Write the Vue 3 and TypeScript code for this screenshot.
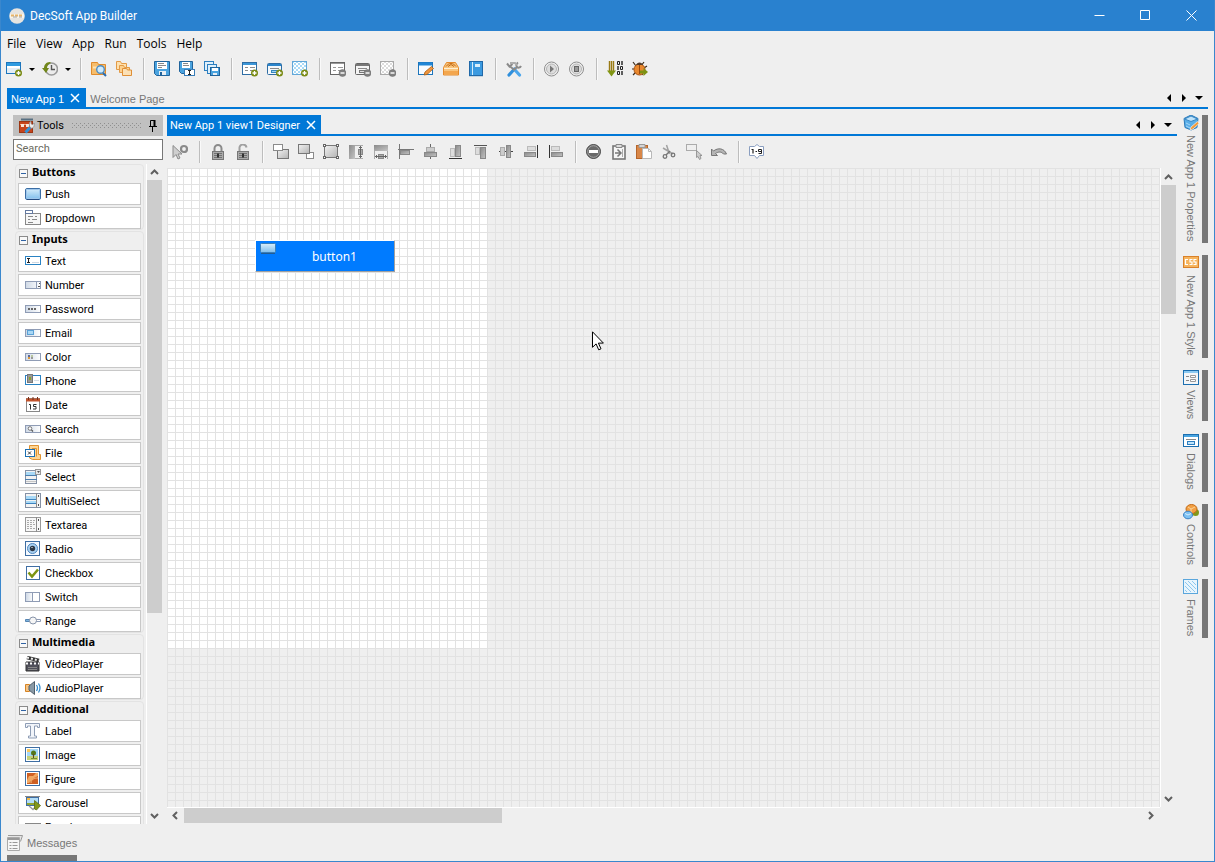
<script setup lang="ts">
import { ref } from 'vue'

interface Tool { label: string; icon: string }
interface ToolGroup { title: string; open: boolean; items: Tool[] }

const minusBadge = '<circle cx="12.500" cy="12" r="3.500" fill="#808080" stroke="#6a6a6a" stroke-width=".5"/><path d="M10.500 12h4" stroke="#fff" stroke-width="1.400"/>'
const plusBadge = '<circle cx="12.500" cy="12" r="3.500" fill="#7a8b16"/><path d="M10.500 12h4M12.500 10v4" stroke="#fff" stroke-width="1.300"/>'
const inputBox = '<rect x=".5" y="4.500" width="15" height="7" fill="url(#g-field)" stroke="#8f9cb5"/>'
const sheet = '<rect x=".5" y="1.500" width="14" height="12" fill="#fff"'

const icons: Record<string, string> = {
  newApp: '<rect x=".5" y="1.500" width="14" height="11" fill="#fff" stroke="#1c75bc"/><path d="M1 3.500h13" stroke="#2f9be0" stroke-width="3"/><path d="M1 7h13v5H1z" fill="#e4edf5"/>' + plusBadge,
  history: '<circle cx="9.500" cy="8" r="6" fill="#ececec" stroke="#9a9a9a" stroke-width="1.600"/><path d="M9.500 4v4.500H13" stroke="#555" stroke-width="1.400" fill="none"/><path d="M8 1C4 1 2 4 2 7H0l4 5 3-5H5c0-2 1-4 4-5z" fill="#71861a"/>',
  folderFind: '<path d="M.5 13.500V1.500h6l1 2h7v10z" fill="#f6bd6c" stroke="#e08b2c"/><path d="M2 6.500h11" stroke="#fde3b4" stroke-width="2"/><circle cx="9.500" cy="8.500" r="3.800" fill="#cfeafc" stroke="#4d8cc4" stroke-width="1.400"/><path d="M12 12l3 3" stroke="#2a6db0" stroke-width="2"/>',
  folders: '<path d="M.5 8.500v-8h4l1 2h5v6z" fill="#fde0ae" stroke="#e39a45"/><path d="M3.500 11.500v-7h4l1 2h5v5z" fill="#fcd08d" stroke="#e39a45"/><path d="M6.500 14.500v-7h4l1 1.500h4v5.500z" fill="#fbe0b5" stroke="#df8f36"/>',
  save: '<path d="M.5 .5h15v14h-13l-2-2z" fill="#4aa3df" stroke="#20639b"/><path d="M3 1h10v7H3z" fill="#fff"/><path d="M4 2.500h6M4 4.500h8M4 6.500h4" stroke="#888"/><path d="M5 10h7v4H5z" fill="#e8eff5"/><path d="M6 11h2v3H6z" fill="#20639b"/>',
  saveAs: '<path d="M.5 .5h13v12h-11l-2-2z" fill="#4aa3df" stroke="#20639b"/><path d="M3 1h8v6H3z" fill="#fff"/><path d="M4 2.500h5M4 4.500h6" stroke="#888"/><rect x="5.500" y="8.500" width="10" height="6" fill="#fff" stroke="#397db8"/><path d="M9 9.500h3M9 13.500h3M10.500 9.500v4" stroke="#222"/>',
  saveAll: '<rect x=".5" y=".5" width="9" height="9" fill="#dff0fb" stroke="#2d7fc0"/><rect x="3.500" y="3.500" width="9" height="9" fill="#dff0fb" stroke="#2d7fc0"/><rect x="6.500" y="6.500" width="9" height="8" fill="#4aa3df" stroke="#20639b"/><path d="M8 7h6v3H8z" fill="#fff"/><path d="M9 12h4v2H9z" fill="#e8eff5"/>',
  viewAdd: sheet + ' stroke="#2e6da4"/><path d="M1 3h13" stroke="#3c97d8" stroke-width="2"/><path d="M3 6.500h3M3 9.500h3M8 6.500h5M8 9.500h3" stroke="#8c8c8c"/>' + plusBadge,
  dialogAdd: '<rect x=".5" y="2.500" width="14" height="11" rx="1" fill="#f4f7fa" stroke="#2e6da4"/><path d="M1 4h13" stroke="#2b85cb" stroke-width="2"/><path d="M3 7.500h9" stroke="#888"/><rect x="4.500" y="9.500" width="6" height="2" fill="#9fd3f3" stroke="#3485bd"/>' + plusBadge,
  frameAdd: '<rect x=".5" y=".5" width="14" height="13" fill="#fff" stroke="#62a7d8"/><rect x="1" y="1" width="13" height="12" fill="url(#p-blue)"/>' + plusBadge,
  viewDel: sheet + ' stroke="#666"/><path d="M1 2.500h13" stroke="#999"/><path d="M3 6.500h3M3 9.500h3M8 6.500h5M8 9.500h3" stroke="#999"/>' + minusBadge,
  dialogDel: '<rect x=".5" y="2.500" width="14" height="11" rx="1" fill="#f4f4f4" stroke="#666"/><path d="M1 4h13" stroke="#777" stroke-width="2"/><path d="M3 7.500h9" stroke="#888"/><rect x="4.500" y="9.500" width="6" height="2" fill="#ddd" stroke="#777"/>' + minusBadge,
  frameDel: '<rect x=".5" y=".5" width="13" height="13" fill="#fff" stroke="#aaa"/><rect x="1" y="1" width="12" height="12" fill="url(#p-grey)"/>' + minusBadge,
  edit: '<rect x=".5" y="1.500" width="14" height="12" fill="#f7fbff" stroke="#1c75bc"/><path d="M1 3h13" stroke="#1f86d6" stroke-width="3"/><path d="M6 14l1-3 6.500-5.500 2 2L9 13.500z" fill="#f0953c" stroke="#a55d18" stroke-width=".8"/>',
  box: '<path d="M.5 6.500l3-5h9l3 5v7.500H.5z" fill="#f9c57e" stroke="#e58a2b"/><path d="M3 5.500c3-4 7-4 10 0M5 5.500l3-2 3 2" stroke="#c46b14" fill="none"/><path d="M1 7.500h14" stroke="#fff0d3"/><path d="M1 10h14v3.500H1z" fill="#f3a64e"/>',
  book: '<rect x="1.500" y=".5" width="13" height="14" fill="#3b9ae0" stroke="#2068a8"/><path d="M4.500 1v13" stroke="#d4ecfb"/><path d="M7 3h5v3H7z" fill="#d9effc"/><path d="M1 15.500h14" stroke="#c3d5e2"/>',
  tools: '<path d="M3 14l5.500-6" stroke="#2f8fdc" stroke-width="3.200" stroke-linecap="round"/><path d="M13.500 14L9 9" stroke="#4ca6ec" stroke-width="3.200" stroke-linecap="round"/><path d="M1 2.500l2.500 3L6.500 3M3.500 5l5 4" stroke="#8a8a8a" stroke-width="2" fill="none"/><path d="M15 5c-1 2-3 2-4 1s-1-3 1-4.500M11 6L8 9" stroke="#8a8a8a" stroke-width="2" fill="none"/><path d="M4 2h5l2 2" stroke="#adadad" stroke-width="2" fill="none"/>',
  play: '<circle cx="7.500" cy="8" r="7" fill="#f1f1f1" stroke="#8d8d8d"/><circle cx="7.500" cy="8" r="5" fill="#ddd" stroke="#b5b5b5"/><path d="M6 4.500v7l4-3.500z" fill="#777"/>',
  stop: '<circle cx="7.500" cy="8" r="7" fill="#f1f1f1" stroke="#8d8d8d"/><circle cx="7.500" cy="8" r="5" fill="#ddd" stroke="#b5b5b5"/><rect x="5.500" y="5.500" width="4" height="5" fill="#999" stroke="#666"/>',
  compile: '<path d="M2.500 0v10M4.500 0v10M6.500 0v10" stroke="#9a7b16" stroke-width="1.400"/><path d="M0 9.500h9l-4.500 6z" fill="#809512"/><path d="M10.500 .5h2v3h-2zM10.500 10.500h2v3h-2zM13.500 5.500h2v3h-2z" fill="none" stroke="#222"/><path d="M15 0v4M11 5v4M15 10v4" stroke="#222" stroke-width="1.400"/>',
  debug: '<path d="M1 1l3 4M12 1l-3 4M0 8h3M15 5l-3 2M1 14l3-3M11 14l-2-3" stroke="#3b2b1c" stroke-width="1.200"/><ellipse cx="7.500" cy="8.500" rx="5.500" ry="5.500" fill="#e9882f" stroke="#a95412"/><path d="M4 4c1-3.500 6-3.500 7 0z" fill="#523c2b"/><path d="M7.500 4v9" stroke="#9a4a0e"/><path d="M8 9.500h3.500V7l4.500 4-4.500 4v-2.500H8z" fill="#7d9214"/>',
  deselect: '<path d="M1 1.500v12l3-3 2 4.500 2-1-2-4h4z" fill="#cfcfcf" stroke="#8b8b8b"/><circle cx="12" cy="5" r="3" fill="#f0f0f0" stroke="#8a8a8a" stroke-width="2.200"/>',
  lock: '<path d="M4.500 8V4.500a3.500 3.500 0 0 1 7 0V8" fill="none" stroke="#8b8b8b" stroke-width="2"/><rect x="2.500" y="7.500" width="11" height="8" fill="#aaa" stroke="#777"/><path d="M4 9.500h8M4 11.500h8M4 13.500h8" stroke="#727272"/><path d="M8 9.500v4" stroke="#333" stroke-width="2"/>',
  unlock: '<path d="M4.500 8V4.500a3.500 3.500 0 0 1 7-1" fill="none" stroke="#a0a0a0" stroke-width="2"/><rect x="2.500" y="7.500" width="11" height="8" fill="#aaa" stroke="#777"/><path d="M4 9.500h8M4 11.500h8M4 13.500h8" stroke="#727272"/><path d="M8 9.500v4" stroke="#333" stroke-width="2"/>',
  front: '<rect x="4.500" y="5.500" width="11" height="9" fill="url(#g-grey)" stroke="#777"/><rect x=".5" y=".5" width="9" height="6" fill="#fff" stroke="#8b8b8b"/>',
  back: '<rect x="8.500" y="8.500" width="7" height="6" fill="#fff" stroke="#8b8b8b"/><rect x=".5" y=".5" width="11" height="9" fill="url(#g-grey)" stroke="#777"/>',
  resize: '<rect x="1.500" y="1.500" width="13" height="12" fill="url(#g-grey)" stroke="#777"/><path d="M0 0h3v3H0zM13 0h3v3h-3zM0 12h3v3H0zM13 12h3v3h-3z" fill="#666"/><path d="M1 1h1v1H1zM14 1h1v1h-1zM1 13h1v1H1zM14 13h1v1h-1z" fill="#fff"/>',
  sameH: '<rect x="1" y="1" width="6" height="14" fill="url(#g-dark)"/><path d="M7 1.500h8M7 14.500h8" stroke="#aaa"/><rect x="10.500" y="5.500" width="4" height="5" fill="#aaa" stroke="#888"/><path d="M12.500 2v12M11 3.500h3M11 12.500h3" stroke="#666"/>',
  sameW: '<rect x="1" y="1" width="14" height="6" fill="url(#g-dark)"/><path d="M1.500 7v8M14.500 7v8" stroke="#aaa"/><rect x="5.500" y="10.500" width="5" height="4" fill="#aaa" stroke="#888"/><path d="M2 12.500h12M3.500 11v3M12.500 11v3" stroke="#666"/>',
  hline: '<path d="M1.500 0v15M0 5.500h16" stroke="#777"/><rect x="2.500" y="6.500" width="9" height="4" fill="url(#g-dark)" stroke="#888"/>',
  centerH: '<path d="M7.500 0v15" stroke="#666"/><rect x="3.500" y="3.500" width="8" height="4" fill="#ccc" stroke="#aaa"/><rect x="1.500" y="8.500" width="12" height="4" fill="url(#g-dark)" stroke="#888"/>',
  bottom: '<rect x="2.500" y="4.500" width="4" height="8" fill="#ddd" stroke="#bbb"/><rect x="7.500" y="1.500" width="5" height="11" fill="url(#g-dark)" stroke="#888"/><path d="M1 14.500h13" stroke="#333"/>',
  top: '<path d="M1 1.500h13" stroke="#555"/><rect x="2.500" y="3.500" width="4" height="7" fill="#ddd" stroke="#bbb"/><rect x="7.500" y="3.500" width="5" height="11" fill="url(#g-dark)" stroke="#888"/>',
  middle: '<path d="M1 7.500h14" stroke="#444"/><rect x="2.500" y="3.500" width="4" height="8" fill="#ccc" stroke="#aaa"/><rect x="8.500" y="1.500" width="4" height="12" fill="url(#g-dark)" stroke="#888"/>',
  right: '<rect x="4.500" y="2.500" width="8" height="4" fill="#ddd" stroke="#bbb"/><rect x="1.500" y="8.500" width="11" height="4" fill="url(#g-dark)" stroke="#888"/><path d="M14.500 1v13" stroke="#333"/>',
  left: '<path d="M1.500 1v13" stroke="#333"/><rect x="3.500" y="2.500" width="8" height="4" fill="#ddd" stroke="#bbb"/><rect x="3.500" y="8.500" width="11" height="4" fill="url(#g-dark)" stroke="#888"/>',
  remove: '<circle cx="7.500" cy="7.500" r="7" fill="#6a6a6a" stroke="#4a4a4a"/><circle cx="7.500" cy="7.500" r="5.800" fill="none" stroke="#a5a5a5"/><path d="M3 6h9v3H3z" fill="#fff"/>',
  clipCopy: '<rect x="2" y="2" width="12" height="13" fill="#f6f6f6" stroke="#777" stroke-width="1.600"/><path d="M5 .5h6v3H5z" fill="#ddd" stroke="#888"/><path d="M4 9h5M6.500 5.500L10 9l-3.500 3.500" fill="none" stroke="#777" stroke-width="1.500"/><path d="M11.500 5v8" stroke="#aaa"/>',
  paste: '<rect x=".5" y="1.500" width="11" height="13" fill="#d98748" stroke="#b5652a"/><path d="M3 .5h6v3H3z" fill="#d5d5d5" stroke="#999"/><path d="M6.500 4.500h6l3 3v7h-9z" fill="#fff" stroke="#b9b9b9"/><path d="M12.500 4.500v3h3" fill="none" stroke="#b9b9b9"/>',
  cut: '<path d="M5.500 1l3 9M2 4l10 6" stroke="#a2a2a2" stroke-width="1.500"/><path d="M9 7l-4 4" stroke="#777" stroke-width="1.500"/><circle cx="4" cy="12.500" r="1.800" fill="none" stroke="#777" stroke-width="1.300"/><circle cx="12" cy="11" r="1.800" fill="none" stroke="#777" stroke-width="1.300"/>',
  marquee: '<rect x=".5" y=".5" width="10" height="6" fill="none" stroke="#666" stroke-dasharray="1 1"/><path d="M10.500 6.500v7l1.500-1 1.500 3 1.500-1-1-3h2z" fill="#ccc" stroke="#888" stroke-width=".8"/>',
  undo: '<path d="M.5 5v6.500h6l-2-2c3-2 6-2 8 .5h3C13 4 7 3.500 2.500 7z" fill="#b5b5b5" stroke="#777"/>',
  order: '<path d="M.5 2.500h5L8 .5l2.500 2h4v9h-4L8 14.500l-2.500-3h-5z" fill="#fff" stroke="#8a9ec0"/><path d="M2.500 5.500h1.500v4M6.500 7.500h1.500" stroke="#222" fill="none" stroke-width="1.200"/><path d="M12.500 7.500h-3v-2h3v4h-3" stroke="#222" fill="none"/>',
  toolbox: '<path d="M2 1.500h12" stroke="#587083" stroke-width="2"/><rect x=".5" y="3.500" width="13" height="11" fill="#c6441c" stroke="#9c3512"/><path d="M1 6.500h12" stroke="#f4a77e"/><path d="M2 6h3v3H2zM7 6h3v3H7z" fill="#f7e5da"/><path d="M6.500 14.500l4.500-5" stroke="#3192d8" stroke-width="3"/><path d="M15 5c-.5 2-3 2-3 0s0-2-1-1-1 5 1 6 4-2 3-5z" fill="#eee" stroke="#888" stroke-width=".7"/>',
  push: '<rect x=".5" y="2.500" width="15" height="11" rx="1.500" fill="url(#g-blue)" stroke="#3b6ea5"/><path d="M2 13.500h12" stroke="#234a80"/><rect x="1.500" y="3.500" width="13" height="9" rx="1" fill="none" stroke="#9fc7ec"/>',
  dropdown: '<rect x=".5" y="3.500" width="15" height="11" fill="#f7f7f7" stroke="#888"/><rect x=".5" y=".5" width="7" height="3" fill="#fff" stroke="#64799f"/><path d="M3 6.500h5M10 6.500h2M3 9.500h2M7 9.500h5M3 12.500h5" stroke="#888"/>',
  text: '<rect x=".5" y="3.500" width="15" height="8" fill="#fff" stroke="#2a83c4"/><path d="M2 5.500h3M2 9.500h3M3.500 5.500v4" stroke="#222"/><path d="M7 9.500h7" stroke="#cfd8e2"/>',
  number: inputBox + '<path d="M11.500 5v7" stroke="#8f9cb5"/><path d="M13 7h1v-1h1v1zM13 9h2v1h-2z" fill="#555"/>',
  password: inputBox + '<path d="M3 7h2v2H3zM6 7h2v2H6zM9 7h2v2H9z" fill="#666"/>',
  email: inputBox + '<rect x="2.500" y="5.500" width="6" height="4" fill="#a9d7f5" stroke="#5aa1d6"/>',
  color: inputBox + '<path d="M3 6h2v2H3z" fill="#5a6aa0"/><path d="M6 6h2v2H6z" fill="#b9c8a0"/><path d="M3 8h2v2H3z" fill="#e0993a"/><path d="M6 8h2v2H6z" fill="#999"/>',
  phone: '<rect x=".5" y="2.500" width="15" height="9" fill="#fff" stroke="#2a83c4"/><path d="M9 7.500h5" stroke="#d6dde5"/><rect x="2.500" y="1.500" width="5" height="8" fill="#999" stroke="#777"/><path d="M4 4h2v3H4z" fill="#8ba32a"/>',
  date: '<rect x="1.500" y="1.500" width="13" height="13" fill="#fff" stroke="#888"/><path d="M1 3h14" stroke="#c1532c" stroke-width="3"/><path d="M3.500 0v3M8 0v3M12.500 0v3" stroke="#7b2f15"/><path d="M4 7.500h1.500v5M11.500 7.500h-3v2h2.500v2.500h-3" stroke="#333" fill="none"/>',
  search: inputBox + '<circle cx="5" cy="7.500" r="1.800" fill="#fff" stroke="#777"/><path d="M6.500 9l1.500 1.500" stroke="#555" stroke-width="1.300"/>',
  file: '<path d="M4.500 13V.5h9v9h2v5h-8z" fill="#fcd594" stroke="#e09332"/><path d="M7 3.500h4.500v8" stroke="#e09332" fill="none"/><rect x=".5" y="4.500" width="9" height="7" fill="#fff" stroke="#1c6fb0"/><path d="M3 6.500l3 3M6 6.500l-3 3" stroke="#333"/>',
  select: '<rect x=".5" y="1.500" width="11" height="13" fill="#f2f2f2" stroke="#8591a5"/><path d="M1 3h10v3H1z" fill="#a9d9f6"/><path d="M0 6.500h12M0 10.500h12" stroke="#4d7fae"/><path d="M1 12.500h10" stroke="#c5c5c5"/><rect x="10.500" y=".5" width="5" height="5" fill="#e9e9e9" stroke="#999"/><path d="M12 2h3l-1.500 2z" fill="#555"/>',
  multi: '<rect x=".5" y=".5" width="15" height="14" fill="#f4f4f4" stroke="#8591a5"/><path d="M1 3h10v3H1zM1 8h10v2H1z" fill="#a9d9f6"/><path d="M1 6.500h10M1 10.500h10" stroke="#3d83be"/><path d="M11.500 0v15" stroke="#8c8c8c"/><path d="M13 2h1v2h-1zM13 11h1v2h-1z" fill="#555"/>',
  textarea: '<rect x=".5" y=".5" width="15" height="14" fill="#f7f7f7" stroke="#999"/><path d="M2 3.500h8M2 5.500h7M2 7.500h8M2 9.500h6M2 11.500h8" stroke="#aaa" stroke-dasharray="2 1"/><path d="M11.500 0v15" stroke="#8c8c8c"/><path d="M13 2h1v2h-1zM13 11h1v2h-1z" fill="#555"/>',
  radio: '<rect x=".5" y=".5" width="14" height="14" fill="#f4f9ff" stroke="#3f6ea3"/><circle cx="7.500" cy="7.500" r="5" fill="#a9d1f2" stroke="#4f86bd"/><circle cx="7.500" cy="7.500" r="2.700" fill="#2d3846"/><path d="M6.500 6h1v1h-1z" fill="#fff"/>',
  checkbox: '<rect x="1.500" y="1.500" width="13" height="13" fill="#fff" stroke="#3f6ea3"/><path d="M3.500 7.500l3.500 4 6-7" fill="none" stroke="#7c9412" stroke-width="2.500"/>',
  switch: '<rect x=".5" y="3.500" width="14" height="9" fill="#fff" stroke="#8f9cb5"/><rect x="1" y="4" width="7" height="8" fill="url(#g-field)"/><path d="M7.500 4v8" stroke="#8f9cb5"/>',
  range: '<path d="M.5 6.500h5v2h-5z" fill="#80b4dd" stroke="#5685b2"/><path d="M10.500 6.500h5v2h-5z" fill="#fff" stroke="#8f9cb5"/><circle cx="8" cy="7.500" r="3.500" fill="#f6f6f6" stroke="#8592a8"/>',
  video: '<path d="M2 1.500l12 3" stroke="#333" stroke-width="3.500"/><path d="M2 1.500l12 3" stroke="#eee" stroke-width="2" stroke-dasharray="2 2"/><path d="M1 6h13v9H1z" fill="#50505a" stroke="#333"/><path d="M1 7.500h13" stroke="#fff" stroke-width="2" stroke-dasharray="2 2"/><path d="M3 11.500h9M3 13.500h9" stroke="#888"/>',
  audio: '<path d="M.5 4.500h4v7h-4z" fill="#f7c483" stroke="#d58325"/><path d="M4 6L9.500 1.500v13L4 10z" fill="#899aa7" stroke="#51606c"/><path d="M11.500 5q2 3 0 6M13.500 3.500q3 4.500 0 9" stroke="#368fd0" fill="none" stroke-width="1.300"/>',
  label: '<path d="M.5 .5h14v4h-2V3h-3v10h2v2h-8v-2h2V3h-3v1.500h-2z" fill="#f2f5fa" stroke="#8e9db5"/>',
  image: '<rect x=".5" y=".5" width="14" height="14" fill="#fff" stroke="#3f6ea3"/><path d="M2 2h11v7H2z" fill="#a3d7f6"/><path d="M2 9h11v4H2z" fill="#c3cf78"/><circle cx="8.500" cy="6" r="2.500" fill="#53781a"/><path d="M8.500 7v4" stroke="#5d4525"/><path d="M6 11.500h6" stroke="#76912c"/><path d="M2 2h3v3H2z" fill="#f8c75c"/>',
  figure: '<rect x=".5" y=".5" width="14" height="14" fill="#fff" stroke="#3f6ea3"/><path d="M2 2h11v11H2z" fill="#cf5f22"/><path d="M2 9l2-4h4l3-3h2v3L9 7l-5 5H2z" fill="#f0a862"/><path d="M6 12c0-4 4-5 7-5" stroke="#f3b67a" fill="none"/>',
  carousel: '<path d="M0 1.500h15" stroke="#888"/><rect x="1.500" y="2.500" width="12" height="8" fill="#b2ddf8" stroke="#3f6ea3"/><path d="M2 8h11v2H2z" fill="#92a72d"/><path d="M2 3h3v2H2z" fill="#f6b940"/><path d="M4 11l4 3.500 3-3.500" fill="none" stroke="#999" stroke-width="1.300"/><path d="M9.500 5.500l6 5-4 4.500-2-1z" fill="#82981a" stroke="#5e6d12" stroke-width=".8"/>',
  panel: '<rect x=".5" y="4.500" width="15" height="10" fill="#eee" stroke="#888"/>',
  properties: '<path d="M8 0l7 3.500-1 9L8 15 2 12.500 1 3.500z" fill="#59aee8" stroke="#2c7ab9"/><path d="M1.500 4L8 6.500 14.500 4 8 1z" fill="#bfe3fa" stroke="#3b89c5"/><path d="M3 8l4 2M3 11l4 2" stroke="#a7d7f7"/><path d="M7 15l1-3 6.500-5.500 1.500 2L10 14z" fill="#f39b3b" stroke="#fff" stroke-width=".6"/>',
  style: '<rect x=".5" y="1.500" width="15" height="11" fill="#f6b45d" stroke="#d9812a"/><path d="M5 4.500H2.500v5H5M9.500 4.500H7v2.500h2v2.500H6.500M13.500 4.500H11v2.500h2v2.500h-2.500" fill="none" stroke="#fff" stroke-width="1.200"/>',
  views: '<rect x=".5" y=".5" width="15" height="14" fill="#f4f6f8" stroke="#1c6fb0"/><path d="M1 2h14" stroke="#8ccaf2" stroke-width="2"/><path d="M3 6.500h3M3 10.500h3" stroke="#888"/><path d="M7.500 5.500h5v2h-5zM7.500 9.500h5v2h-5z" fill="#fff" stroke="#999"/>',
  dialogs: '<rect x=".5" y="1.500" width="15" height="12" fill="#fff" stroke="#1c6fb0"/><path d="M1 3h14" stroke="#49a4e0" stroke-width="2"/><path d="M3 6.500h10" stroke="#888"/><rect x="4.500" y="8.500" width="7" height="3" fill="#bfe3fa" stroke="#2d7fc0"/>',
  controls: '<circle cx="12.500" cy="8.500" r="3.500" fill="#82981a"/><ellipse cx="8.500" cy="5" rx="5.500" ry="4.500" fill="#f2a044" stroke="#c36a16"/><path d="M5 3l3 2 4-2M8 5v4" stroke="#fbd39a" fill="none"/><ellipse cx="5" cy="11" rx="4.500" ry="3.800" fill="#7cc1f3" stroke="#3b80c4"/><path d="M2 9.500l3 1.500 3-1.500" stroke="#d7eefd" fill="none"/>',
  frames: '<rect x=".5" y=".5" width="14" height="14" fill="#e9f5fd" stroke="#5aa6dc"/><path d="M2 3l10 10M2 7l6 6M2 11l2 2M5 2l8 8M9 2l4 4" stroke="#8ec8ee"/>',
  messages: '<path d="M1 .5h14.500l-2 6" fill="#e4e4e4" stroke="#999"/><path d="M.5 2.500h12v13H.5z" fill="#f7f7f7" stroke="#aaa"/><path d="M1 4h11" stroke="#999" stroke-width="2"/><path d="M2.500 7.500h2M5.500 7.500h5M2.500 10.500h2M5.500 10.500h5M2.500 13.500h2M5.500 13.500h5" stroke="#999"/>'
}

const menus = ['File', 'View', 'App', 'Run', 'Tools', 'Help']

const appTools: string[][] = [
  ['folderFind', 'folders'],
  ['save', 'saveAs', 'saveAll'],
  ['viewAdd', 'dialogAdd', 'frameAdd'],
  ['viewDel', 'dialogDel', 'frameDel'],
  ['edit', 'box', 'book'],
  ['tools'],
  ['play', 'stop'],
  ['compile', 'debug']
]

const designTools: string[][] = [
  ['deselect'],
  ['lock', 'unlock'],
  ['front', 'back', 'resize', 'sameH', 'sameW', 'hline', 'centerH', 'bottom', 'top', 'middle', 'right', 'left'],
  ['remove', 'clipCopy', 'paste', 'cut', 'marquee', 'undo'],
  ['order']
]

const groups = ref<ToolGroup[]>([
  { title: 'Buttons', open: true, items: [{ label: 'Push', icon: 'push' }, { label: 'Dropdown', icon: 'dropdown' }] },
  {
    title: 'Inputs', open: true, items: [
      { label: 'Text', icon: 'text' }, { label: 'Number', icon: 'number' },
      { label: 'Password', icon: 'password' }, { label: 'Email', icon: 'email' },
      { label: 'Color', icon: 'color' }, { label: 'Phone', icon: 'phone' },
      { label: 'Date', icon: 'date' }, { label: 'Search', icon: 'search' },
      { label: 'File', icon: 'file' }, { label: 'Select', icon: 'select' },
      { label: 'MultiSelect', icon: 'multi' }, { label: 'Textarea', icon: 'textarea' },
      { label: 'Radio', icon: 'radio' }, { label: 'Checkbox', icon: 'checkbox' },
      { label: 'Switch', icon: 'switch' }, { label: 'Range', icon: 'range' }
    ]
  },
  { title: 'Multimedia', open: true, items: [{ label: 'VideoPlayer', icon: 'video' }, { label: 'AudioPlayer', icon: 'audio' }] },
  {
    title: 'Additional', open: true, items: [
      { label: 'Label', icon: 'label' }, { label: 'Image', icon: 'image' },
      { label: 'Figure', icon: 'figure' }, { label: 'Carousel', icon: 'carousel' },
      { label: 'Panel', icon: 'panel' }
    ]
  }
])

const dock: Tool[] = [
  { label: 'New App 1 Properties', icon: 'properties' },
  { label: 'New App 1 Style', icon: 'style' },
  { label: 'Views', icon: 'views' },
  { label: 'Dialogs', icon: 'dialogs' },
  { label: 'Controls', icon: 'controls' },
  { label: 'Frames', icon: 'frames' }
]

const query = ref('')
</script>

<template>
  <div class="window">
    <svg width="0" height="0" class="defs" aria-hidden="true">
      <defs>
        <linearGradient id="g-grey" x1="0" y1="0" x2="1" y2="1"><stop offset="0" stop-color="#f2f2f2" /><stop offset="1" stop-color="#b4b4b4" /></linearGradient>
        <linearGradient id="g-dark" x1="0" y1="0" x2="1" y2="1"><stop offset="0" stop-color="#8a8a8a" /><stop offset="1" stop-color="#c4c4c4" /></linearGradient>
        <linearGradient id="g-blue" x1="0" y1="0" x2="0" y2="1"><stop offset="0" stop-color="#d8eefb" /><stop offset="1" stop-color="#7dbdec" /></linearGradient>
        <linearGradient id="g-field" x1="0" y1="0" x2="1" y2="0"><stop offset="0" stop-color="#cfd9e6" /><stop offset="1" stop-color="#ffffff" /></linearGradient>
        <pattern id="p-blue" width="4" height="4" patternUnits="userSpaceOnUse"><path d="M0 0h2v2H0zM2 2h2v2H2z" fill="#a9daf6" /></pattern>
        <pattern id="p-grey" width="4" height="4" patternUnits="userSpaceOnUse"><path d="M0 0h2v2H0zM2 2h2v2H2z" fill="#dcdcdc" /></pattern>
      </defs>
    </svg>

    <header class="titlebar">
      <svg class="logo" viewBox="0 0 16 16" aria-hidden="true">
        <circle cx="8" cy="8" r="7.800" fill="#e6e4e0" />
        <path d="M1 6h14v4H1z" fill="#f7f3ea" />
        <path d="M2 7.500h3M6 7.500h3M10 7.500h3" stroke="#e6b368" stroke-width="2" />
        <path d="M4 9h4M10 9h3" stroke="#a3a3a3" />
      </svg>
      <h1>DecSoft App Builder</h1>
      <div class="controls">
        <button type="button" aria-label="Minimize"><svg viewBox="0 0 11 11"><path d="M.5 5.500h10" /></svg></button>
        <button type="button" aria-label="Maximize"><svg viewBox="0 0 11 11"><path d="M.5 .5h9v9h-9z" /></svg></button>
        <button type="button" aria-label="Close"><svg viewBox="0 0 11 11"><path d="M.5 .5l10 10M10.500 .5l-10 10" /></svg></button>
      </div>
    </header>

    <nav class="menubar"><button v-for="m in menus" :key="m" type="button">{{ m }}</button></nav>

    <div class="toolbar" role="toolbar" aria-label="Application">
      <div class="group split">
        <button type="button" class="tool" aria-label="New"><svg viewBox="0 0 16 16" v-html="icons.newApp" /></button>
        <button type="button" class="drop" aria-label="New options"><svg viewBox="0 0 6 3"><path d="M0 0h6L3 3z" /></svg></button>
        <button type="button" class="tool" aria-label="Recent"><svg viewBox="0 0 16 16" v-html="icons.history" /></button>
        <button type="button" class="drop" aria-label="Recent options"><svg viewBox="0 0 6 3"><path d="M0 0h6L3 3z" /></svg></button>
      </div>
      <template v-for="(g, i) in appTools" :key="i">
        <span class="sep" />
        <div class="group">
          <button v-for="t in g" :key="t" type="button" class="tool" :aria-label="t"><svg viewBox="0 0 16 16" v-html="icons[t]" /></button>
        </div>
      </template>
    </div>

    <div class="tabs outer">
      <div class="tab active">
        <button type="button" class="name">New App 1</button>
        <button type="button" class="close" aria-label="Close New App 1"><svg viewBox="0 0 10 10"><path d="M1 1l8 8M9 1L1 9" /></svg></button>
      </div>
      <div class="tab"><button type="button" class="name">Welcome Page</button></div>
      <div class="arrows">
        <button type="button" aria-label="Previous tab"><svg viewBox="0 0 8 8"><path d="M6 0v8L2 4z" /></svg></button>
        <button type="button" aria-label="Next tab"><svg viewBox="0 0 8 8"><path d="M2 0v8l4-4z" /></svg></button>
        <button type="button" aria-label="List tabs"><svg viewBox="0 0 8 8"><path d="M0 2h8L4 6z" /></svg></button>
      </div>
    </div>

    <main class="body">
      <aside class="tools">
        <header class="panel-head">
          <svg class="ico" viewBox="0 0 16 16" v-html="icons.toolbox" />
          <h2>Tools</h2>
          <span class="grip" />
          <button type="button" class="pin" aria-label="Pin panel"><svg viewBox="0 0 8 12"><path d="M1.500 .5h5M1.500 .5v6M0 6.500h8M3.500 7v5" /><path d="M5.500 1v5" stroke-width="2" /></svg></button>
        </header>
        <input v-model="query" class="search" type="text" placeholder="Search" aria-label="Search" />
        <div class="list-wrap">
          <div class="list">
            <section v-for="g in groups" :key="g.title" class="tool-group">
              <button type="button" class="group-head" :aria-expanded="g.open" @click="g.open = !g.open">
                <svg viewBox="0 0 9 9"><rect x=".5" y=".5" width="8" height="8" fill="#f8f8f8" stroke="#8a8a8a" /><path d="M2 4.500h5" stroke="#2f62a3" /></svg>
                {{ g.title }}
              </button>
              <div v-if="g.open" class="items">
                <button v-for="t in g.items" :key="t.label" type="button" class="item">
                  <svg class="ico" viewBox="0 0 16 16" v-html="icons[t.icon]" />{{ t.label }}
                </button>
              </div>
            </section>
          </div>
          <div class="vbar">
            <button type="button" aria-label="Scroll up"><svg viewBox="0 0 9 6"><path d="M1 5l3.500-3.500L8 5" /></svg></button>
            <div class="track"><span class="thumb tools-thumb" /></div>
            <button type="button" aria-label="Scroll down"><svg viewBox="0 0 9 6"><path d="M1 1l3.500 3.500L8 1" /></svg></button>
          </div>
        </div>
      </aside>

      <section class="designer">
        <div class="tabs">
          <div class="tab active wide">
            <button type="button" class="name">New App 1 view1 Designer</button>
            <button type="button" class="close" aria-label="Close designer"><svg viewBox="0 0 10 10"><path d="M1 1l8 8M9 1L1 9" /></svg></button>
          </div>
          <div class="arrows">
            <button type="button" aria-label="Previous view"><svg viewBox="0 0 8 8"><path d="M6 0v8L2 4z" /></svg></button>
            <button type="button" aria-label="Next view"><svg viewBox="0 0 8 8"><path d="M2 0v8l4-4z" /></svg></button>
            <button type="button" aria-label="List views"><svg viewBox="0 0 8 8"><path d="M0 2h8L4 6z" /></svg></button>
          </div>
        </div>
        <div class="toolbar design" role="toolbar" aria-label="Designer">
          <template v-for="(g, i) in designTools" :key="i">
            <span v-if="i" class="sep" />
            <div class="group">
              <button v-for="t in g" :key="t" type="button" class="tool" :aria-label="t"><svg viewBox="0 0 16 16" v-html="icons[t]" /></button>
            </div>
          </template>
        </div>
        <div class="stage">
          <div class="canvas">
            <div class="view" />
            <button type="button" class="widget">
              <svg viewBox="0 0 16 11"><rect x=".5" y=".5" width="15" height="9" rx="1" fill="url(#g-blue)" stroke="#3b7fb8" /><path d="M1 10.500h14" stroke="#215c94" /></svg>
              button1
            </button>
            <svg class="pointer" viewBox="0 0 12 20" aria-hidden="true"><path d="M.5 .8v15.500l3.600-3.400 2.600 5.900 2.300-1-2.600-5.700h5z" fill="#fff" stroke="#000" /></svg>
          </div>
          <div class="vbar">
            <button type="button" aria-label="Scroll canvas up"><svg viewBox="0 0 9 6"><path d="M1 5l3.500-3.500L8 5" /></svg></button>
            <div class="track"><span class="thumb canvas-thumb" /></div>
            <button type="button" aria-label="Scroll canvas down"><svg viewBox="0 0 9 6"><path d="M1 1l3.500 3.500L8 1" /></svg></button>
          </div>
        </div>
        <div class="hbar">
          <button type="button" aria-label="Scroll left"><svg viewBox="0 0 6 9"><path d="M5 1L1.500 4.500 5 8" /></svg></button>
          <div class="track"><span class="thumb" /></div>
          <button type="button" aria-label="Scroll right"><svg viewBox="0 0 6 9"><path d="M1 1l3.500 3.500L1 8" /></svg></button>
        </div>
      </section>

      <aside class="dock">
        <button v-for="d in dock" :key="d.label" type="button">
          <svg class="ico" viewBox="0 0 16 16" v-html="icons[d.icon]" /><span>{{ d.label }}</span>
        </button>
      </aside>
    </main>

    <footer class="status">
      <button type="button"><svg class="ico" viewBox="0 0 16 16" v-html="icons.messages" />Messages</button>
    </footer>
  </div>
</template>

<style>
body { margin: 0; }
</style>

<style scoped>
* { box-sizing: border-box; }
button { appearance: none; border: 0; padding: 0; margin: 0; background: none; color: inherit; font: inherit; display: flex; align-items: center; justify-content: center; white-space: nowrap; }
svg { display: block; flex: none; }
h1, h2 { margin: 0; font-weight: 400; }

.window { height: 100vh; display: flex; flex-direction: column; background: #efefef; border: 1px solid #3a87cd; border-top: 0; font-family: Roboto, "Noto Sans", sans-serif; font-size: 11px; color: #000; overflow: hidden; }
.defs { position: absolute; }
.ico { width: 16px; height: 16px; }

.titlebar { display: flex; align-items: center; height: 31px; flex: none; margin: 0 -1px; padding: 0 1px 0 9px; background: #2981cf; color: #fff; }
.logo { width: 16px; height: 16px; margin-right: 5px; }
.titlebar h1 { flex: 1; font-size: 12px; }
.controls { display: flex; height: 100%; }
.controls button { width: 46px; }
.controls svg { width: 11px; height: 11px; fill: none; stroke: #fff; }

.menubar { display: flex; gap: 10px; height: 26px; flex: none; padding: 0 0 2px 6px; font-family: "Open Sans", "Noto Sans", sans-serif; font-size: 12px; }

.toolbar { display: flex; align-items: center; height: 24px; flex: none; padding-left: 5px; }
.group { display: flex; gap: 9px; }
.group.split { gap: 0; margin-right: -9px; }
.tool, .tool svg { width: 16px; height: 16px; }
.drop { width: 20px; }
.drop svg { width: 6px; height: 3px; }
.sep { width: 22px; height: 22px; flex: none; background: linear-gradient(90deg, #bdbdbd 1px, #fafafa 1px) 11px 0 / 2px 100% no-repeat; }

.tabs { display: flex; align-items: stretch; height: 21px; flex: none; border-bottom: 2px solid #0078d7; }
.tabs.outer { margin: 7px 6px 0; font-family: "Liberation Sans", Arial, sans-serif; }
.tab { display: flex; align-items: center; padding: 0 4px; color: #777; }
.tab.active { background: #0078d7; color: #fff; gap: 6px; padding-right: 6px; }
.tab.wide { padding-left: 3px; padding-right: 5px; }
.name { height: 19px; padding-top: 2px; }
.close svg { width: 10px; height: 10px; fill: none; stroke: #fff; stroke-width: 1.5; }
.arrows { display: flex; align-items: center; gap: 7px; margin-left: auto; padding-right: 5px; }
.arrows svg { width: 8px; height: 8px; }

.body { flex: 1; min-height: 0; display: grid; grid-template-columns: 150px minmax(0, 1fr) 27px; gap: 4px; padding: 6px 6px 0 12px; }

.tools { display: flex; flex-direction: column; min-height: 0; }
.panel-head { display: flex; align-items: center; height: 21px; flex: none; padding: 0 6px; background: #c0c0c0; }
.panel-head h2 { font-size: 11px; margin: 0 8px 0 2px; }
.grip { flex: 1; height: 5px; background-image: linear-gradient(#8f8f8f, #8f8f8f), linear-gradient(#8f8f8f, #8f8f8f); background-size: 1px 1px; background-image: conic-gradient(from 270deg at 1px 1px, #8f8f8f 90deg, transparent 0), conic-gradient(from 270deg at 1px 1px, #8f8f8f 90deg, transparent 0); background-size: 4px 4px; background-position: 0 0, 2px 2px; }
.pin { margin-left: 8px; }
.pin svg { width: 8px; height: 12px; fill: none; stroke: #000; }
.search { height: 21px; flex: none; width: 100%; margin: 3px 0 4px; padding: 0 2px 2px; border: 1px solid #777; background: #fff; font: 11px Roboto, "Noto Sans", sans-serif; outline: none; }
.search::placeholder { color: #6b6b60; opacity: 1; }
.list-wrap { flex: 1; min-height: 0; display: flex; }
.list { flex: 1; min-width: 0; overflow: hidden; padding: 0 2px; }
.tool-group { border: 1px solid #e3e3e3; border-radius: 4px; margin-bottom: 1px; padding: 0 2px; }
.group-head { height: 18px; gap: 4px; padding: 0 0 4px 1px; font-family: "Noto Sans", sans-serif; font-weight: 700; font-size: 11px; line-height: 14px; }
.group-head svg { width: 9px; height: 9px; margin-top: 2px; }
.items { display: grid; gap: 2px; }
.item { height: 22px; justify-content: flex-start; gap: 4px; padding-left: 6px; border: 1px solid #c8c8c8; background: #fff; }

.vbar { width: 17px; flex: none; display: flex; flex-direction: column; border-left: 1px solid #fff; }
.vbar button { height: 16px; flex: none; padding-right: 2px; }
.vbar svg { width: 9px; height: 6px; }
.vbar svg, .hbar svg { fill: none; stroke: #606060; stroke-width: 2; }
.track { flex: 1; display: flex; min-height: 0; }
.vbar .track { padding-right: 1px; flex-direction: column; }
.thumb { display: block; background: #cdcdcd; }
.tools-thumb { height: 69%; }
.stage .vbar button { height: 17px; }
.canvas-thumb { height: 21.4%; }
.hbar { display: flex; height: 17px; flex: none; border-top: 1px solid #fff; margin-right: 17px; }
.hbar button { width: 17px; flex: none; padding: 0 1px 2px 0; }
.hbar svg { width: 6px; height: 9px; }
.hbar .thumb { width: 33.2%; height: 15px; }

.designer { display: flex; flex-direction: column; min-height: 0; }
.toolbar.design { height: 32px; }
.stage { flex: 1; min-height: 0; display: flex; }
.canvas { flex: 1; position: relative; overflow: hidden; }
.canvas, .view { background-image: linear-gradient(90deg, #e2e2e2 1px, transparent 1px), linear-gradient(#e2e2e2 1px, transparent 1px); background-size: 8px 8px; }
.view { width: 321px; height: 480px; background-color: #fff; }
.widget { position: absolute; left: 88px; top: 72px; width: 140px; height: 32px; padding-left: 19px; border: 1px solid #fff; border-right-color: #a0a0a0; border-bottom-color: #a0a0a0; background: #007bff; color: #fff; font: 12px "Noto Sans", sans-serif; }
.widget svg { position: absolute; left: 4px; top: 2px; width: 16px; height: 11px; }
.pointer { position: absolute; left: 425px; top: 163px; width: 12px; height: 20px; }

.dock { display: flex; flex-direction: column; gap: 12px; font-family: "Liberation Sans", Arial, sans-serif; color: #777; }
.dock button { flex-direction: column; gap: 4px; padding: 0 3px 2px 2px; border-right: 6px solid #777; }
.dock span { writing-mode: vertical-rl; }

.status { height: 37px; flex: none; display: flex; align-items: flex-end; padding-left: 6px; font-family: "Liberation Sans", Arial, sans-serif; color: #777; }
.status button { height: 26px; gap: 4px; padding-bottom: 4px; border-bottom: 6px solid #777; }
</style>
